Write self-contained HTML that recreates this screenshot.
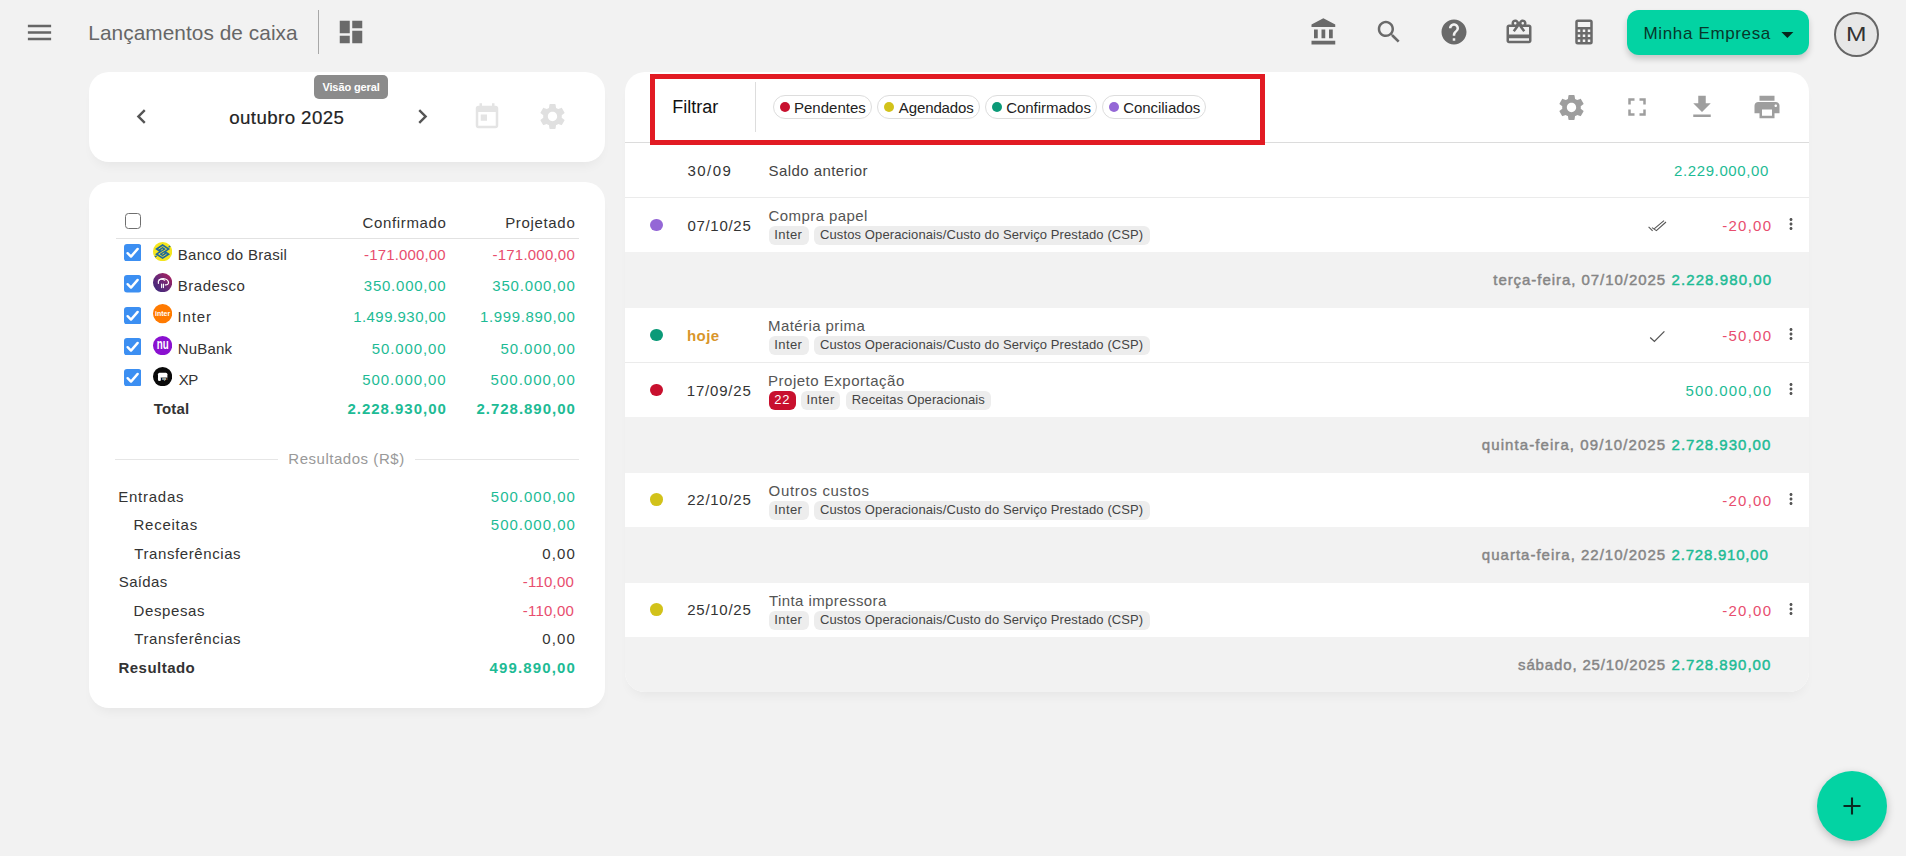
<!DOCTYPE html>
<html lang="pt-BR"><head><meta charset="utf-8"><title>Lançamentos de caixa</title>
<style>
html,body{margin:0;padding:0}
body{width:1906px;height:856px;overflow:hidden;background:#f2f2f2;position:relative;font-family:"Liberation Sans",sans-serif;}
.abs,.ic,.t{position:absolute;display:block}
.t{white-space:nowrap;line-height:1}
.card{background:#fff;border-radius:20px;box-shadow:0 8px 12px -5px rgba(0,0,0,.055)}
.btn{background:#03d3a3;border-radius:12px;box-shadow:0 4px 6px rgba(0,0,0,.18)}
.avatar{box-sizing:border-box;border:2px solid #666;border-radius:50%;background:#e7e7e7}
.fchip{box-sizing:border-box;border:1px solid #ddd;border-radius:12px;background:#fff}
.dot{border-radius:50%}
.fab{border-radius:50%;background:#03d3a3;box-shadow:0 3px 8px rgba(0,0,0,.22)}
</style></head>
<body>
<svg class="ic" style="left:23.60px;top:16.50px" width="31" height="31" viewBox="0 0 24 24"><path fill="#666" d="M3 18h18v-2H3v2zm0-5h18v-2H3v2zm0-7v2h18V6H3z"/></svg>
<span class="t" id="t0" style="left:88.29px;top:23.00px;font-size:20.8px;color:#666;letter-spacing:0.067px;">Lançamentos de caixa</span>
<div class="abs" style="left:318px;top:10px;width:1px;height:44px;background:#a8a8a8"></div>
<svg class="ic" style="left:336.00px;top:17.00px" width="30" height="30" viewBox="0 0 24 24"><path fill="#6a6a6a" d="M3 13h8V3H3v10zm0 8h8v-6H3v6zm10 0h8V11h-8v10zm0-18v6h8V3h-8z"/></svg>
<svg class="ic" style="left:1309.00px;top:17.00px" width="30" height="30" viewBox="0 0 24 24"><path fill="#6a6a6a" d="M4 10v7h3v-7H4zm6 0v7h3v-7h-3zM2 22h19v-3H2v3zm14-12v7h3v-7h-3zm-4.5-9L2 6v2h19V6l-9.5-5z"/></svg>
<svg class="ic" style="left:1374.00px;top:17.00px" width="30" height="30" viewBox="0 0 24 24"><path fill="#6a6a6a" d="M15.5 14h-.79l-.28-.27C15.41 12.59 16 11.11 16 9.5 16 5.91 13.09 3 9.5 3S3 5.91 3 9.5 5.91 16 9.5 16c1.61 0 3.09-.59 4.23-1.57l.27.28v.79l5 4.99L20.49 19l-4.99-5zm-6 0C7.01 14 5 11.99 5 9.5S7.01 5 9.5 5 14 7.01 14 9.5 11.99 14 9.5 14z"/></svg>
<svg class="ic" style="left:1439.25px;top:17.00px" width="30" height="30" viewBox="0 0 24 24"><path fill="#6a6a6a" d="M12 2C6.48 2 2 6.48 2 12s4.48 10 10 10 10-4.48 10-10S17.52 2 12 2zm1 17h-2v-2h2v2zm2.07-7.75l-.9.92C13.45 12.9 13 13.5 13 15h-2v-.5c0-1.1.45-2.1 1.17-2.83l1.24-1.26c.37-.36.59-.86.59-1.41 0-1.1-.9-2-2-2s-2 .9-2 2H8c0-2.21 1.79-4 4-4s4 1.79 4 4c0 .88-.36 1.68-.93 2.25z"/></svg>
<svg class="ic" style="left:1504.00px;top:17.00px" width="30" height="30" viewBox="0 0 24 24"><path fill="#6a6a6a" d="M20 6h-2.18c.11-.31.18-.65.18-1 0-1.66-1.34-3-3-3-1.05 0-1.96.54-2.5 1.35l-.5.67-.5-.68C10.96 2.54 10.05 2 9 2 7.34 2 6 3.34 6 5c0 .35.07.69.18 1H4c-1.11 0-1.99.89-1.99 2L2 19c0 1.11.89 2 2 2h16c1.11 0 2-.89 2-2V8c0-1.11-.89-2-2-2zm-5-2c.55 0 1 .45 1 1s-.45 1-1 1-1-.45-1-1 .45-1 1-1zM9 4c.55 0 1 .45 1 1s-.45 1-1 1-1-.45-1-1 .45-1 1-1zm11 15H4v-2h16v2zm0-5H4V8h5.08L7 10.83 8.62 12 11 8.76l1-1.36 1 1.36L15.38 12 17 10.83 14.92 8H20v6z"/></svg>
<svg class="ic" style="left:1569.00px;top:17.00px" width="30" height="30" viewBox="0 0 24 24"><path fill="#6a6a6a" d="M7,2H17A2,2 0 0,1 19,4V20A2,2 0 0,1 17,22H7A2,2 0 0,1 5,20V4A2,2 0 0,1 7,2M7,4V8H17V4H7M7,10V12H9V10H7M11,10V12H13V10H11M15,10V12H17V10H15M7,14V16H9V14H7M11,14V16H13V14H11M15,14V16H17V14H15M7,18V20H9V18H7M11,18V20H13V18H11M15,18V20H17V18H15Z"/></svg>
<div class="abs btn" style="left:1627px;top:10px;width:182px;height:44.5px"></div>
<span class="t" id="t1" style="left:1643.51px;top:25.00px;font-size:17px;color:#07382b;letter-spacing:0.645px;">Minha Empresa</span>
<svg class="ic" style="left:1772.60px;top:20.10px" width="28.8" height="28.8" viewBox="0 0 24 24"><path fill="#07251c" d="M7 10l5 5 5-5z"/></svg>
<div class="abs avatar" style="left:1834px;top:12px;width:45px;height:45px"></div>
<span class="t" id="t2" style="left:1846.38px;top:23.00px;font-size:21px;color:#333;transform:scaleX(1.17);transform-origin:0 0;">M</span>
<div class="abs card" style="left:89px;top:72px;width:516px;height:90px"></div>
<svg class="ic" style="left:127.00px;top:102.00px" width="29" height="29" viewBox="0 0 24 24"><path fill="#555" d="M15.41 7.41L14 6l-6 6 6 6 1.41-1.41L10.83 12z"/></svg>
<span class="t" id="t3" style="left:229.21px;top:109.00px;font-size:18.7px;color:#222;letter-spacing:0.414px;-webkit-text-stroke:0.2px #222;">outubro 2025</span>
<svg class="ic" style="left:408.20px;top:102.00px" width="29" height="29" viewBox="0 0 24 24"><path fill="#555" d="M10 6L8.59 7.41 13.17 12l-4.58 4.59L10 18l6-6z"/></svg>
<svg class="ic" style="left:472.25px;top:101.75px" width="30" height="30" viewBox="0 0 24 24"><path fill="#e4e4e4" d="M19 3h-1V1h-2v2H8V1H6v2H5c-1.11 0-1.99.9-1.99 2L3 19c0 1.1.89 2 2 2h14c1.1 0 2-.9 2-2V5c0-1.1-.9-2-2-2zm0 16H5V8h14v11zM7 10h5v5H7z"/></svg>
<svg class="ic" style="left:537.25px;top:101.40px" width="31" height="31" viewBox="0 0 24 24"><path fill="#e0e0e0" d="M19.14 12.94c.04-.3.06-.61.06-.94 0-.32-.02-.64-.07-.94l2.03-1.58c.18-.14.23-.41.12-.61l-1.92-3.32c-.12-.22-.37-.29-.59-.22l-2.39.96c-.5-.38-1.03-.7-1.62-.94l-.36-2.54c-.04-.24-.24-.41-.48-.41h-3.84c-.24 0-.43.17-.47.41l-.36 2.54c-.59.24-1.13.57-1.62.94l-2.39-.96c-.22-.08-.47 0-.59.22L2.74 8.87c-.12.21-.08.47.12.61l2.03 1.58c-.05.3-.09.63-.09.94s.02.64.07.94l-2.03 1.58c-.18.14-.23.41-.12.61l1.92 3.32c.12.22.37.29.59.22l2.39-.96c.5.38 1.03.7 1.62.94l.36 2.54c.05.24.24.41.48.41h3.84c.24 0 .44-.17.47-.41l.36-2.54c.59-.24 1.13-.56 1.62-.94l2.39.96c.22.08.47 0 .59-.22l1.92-3.32c.12-.22.07-.47-.12-.61l-2.01-1.58zM12 15.6c-1.98 0-3.6-1.62-3.6-3.6s1.62-3.6 3.6-3.6 3.6 1.62 3.6 3.6-1.62 3.6-3.6 3.6z"/></svg>
<div class="abs" style="left:313.5px;top:75px;width:74.5px;height:24px;border-radius:5px;background:#8b8b8b"></div>
<span class="t" id="t4" style="left:322.42px;top:82.00px;font-size:11px;color:#fff;font-weight:700;letter-spacing:-0.114px;">Visão geral</span>
<div class="abs card" style="left:89px;top:182px;width:516px;height:526px"></div>
<div class="abs" style="left:124.5px;top:213px;width:16px;height:16px;box-sizing:border-box;border:1.7px solid #6f6f6f;border-radius:3.5px;background:#fff"></div>
<span class="t" id="t5" style="left:362.44px;top:215.00px;font-size:15px;color:#333;letter-spacing:0.662px;">Confirmado</span>
<span class="t" id="t6" style="left:505.17px;top:215.00px;font-size:15px;color:#333;letter-spacing:0.669px;">Projetado</span>
<div class="abs" style="left:116px;top:238px;width:463px;height:1px;background:#e2e2e2"></div>
<svg class="ic" style="left:124px;top:244.00px" width="17.4" height="17.4" viewBox="0 0 17.4 17.4"><rect width="17.4" height="17.4" rx="3" fill="#3c8ff2"/><path d="M3.6 9.2 L7 12.6 L13.7 4.9" fill="none" stroke="#fff" stroke-width="2.4" stroke-linecap="round" stroke-linejoin="round"/></svg>
<svg class="ic" style="left:153px;top:241.9px" width="19.2" height="19.2" viewBox="0 0 20 20"><circle cx="10" cy="10" r="10" fill="#f4e51d"/><path d="M10 2.2 L17.8 7.3 L13.8 10 L17.8 12.7 L10 17.8 L2.2 12.7 L6.2 10 L2.2 7.3 Z" fill="#1f679a"/><path d="M18 4.3 L16.2 5.5 M2 15.7 L3.8 14.5" stroke="#1f679a" stroke-width="1.4" fill="none"/><path d="M5.8 7.4 L10 4.7 L14.2 7.4 L5.8 12.6 L10 15.3 L14.2 12.6" fill="none" stroke="#e6dd3c" stroke-width="1"/><path d="M8.2 8.6 L10.4 7.2 M11.8 11.4 L9.6 12.8" fill="none" stroke="#e6dd3c" stroke-width="0.9"/></svg>
<span class="t" id="t7" style="left:177.77px;top:247.00px;font-size:15px;color:#333;letter-spacing:0.291px;">Banco do Brasil</span>
<span class="t" id="t8" style="left:364.03px;top:247.00px;font-size:15px;color:#e84d6e;letter-spacing:0.158px;">-171.000,00</span>
<span class="t" id="t9" style="left:492.53px;top:247.00px;font-size:15px;color:#e84d6e;letter-spacing:0.218px;">-171.000,00</span>
<svg class="ic" style="left:124px;top:275.25px" width="17.4" height="17.4" viewBox="0 0 17.4 17.4"><rect width="17.4" height="17.4" rx="3" fill="#3c8ff2"/><path d="M3.6 9.2 L7 12.6 L13.7 4.9" fill="none" stroke="#fff" stroke-width="2.4" stroke-linecap="round" stroke-linejoin="round"/></svg>
<svg class="ic" style="left:153px;top:273.15px" width="19.2" height="19.2" viewBox="0 0 20 20"><defs><linearGradient id="brg" x1="0" y1="1" x2="1" y2="0"><stop offset="0" stop-color="#33297c"/><stop offset="0.5" stop-color="#6a2877"/><stop offset="1" stop-color="#b71f58"/></linearGradient></defs><circle cx="10" cy="10" r="10" fill="url(#brg)"/><g fill="none" stroke="#fff" stroke-linecap="round"><path stroke-width="1.25" d="M5.6 10.8 C4.8 7.6 7.8 5.7 10.8 5.8 C13.8 5.9 16.4 7.8 16.2 10.2 C16 12 14.4 12.6 12.8 12.4"/><path stroke-width="1.1" d="M6.2 7.3 C7.8 6.3 10.6 6.5 12.2 7.6"/><path stroke-width="1.2" d="M9 11.6 V15.2 M10.9 11.6 V15.2"/></g></svg>
<span class="t" id="t10" style="left:177.77px;top:278.00px;font-size:15px;color:#333;letter-spacing:0.542px;">Bradesco</span>
<span class="t" id="t11" style="left:363.83px;top:278.00px;font-size:15px;color:#1dbb95;letter-spacing:0.754px;">350.000,00</span>
<span class="t" id="t12" style="left:492.23px;top:278.00px;font-size:15px;color:#1dbb95;letter-spacing:0.832px;">350.000,00</span>
<svg class="ic" style="left:124px;top:306.50px" width="17.4" height="17.4" viewBox="0 0 17.4 17.4"><rect width="17.4" height="17.4" rx="3" fill="#3c8ff2"/><path d="M3.6 9.2 L7 12.6 L13.7 4.9" fill="none" stroke="#fff" stroke-width="2.4" stroke-linecap="round" stroke-linejoin="round"/></svg>
<svg class="ic" style="left:153px;top:304.4px" width="19.2" height="19.2" viewBox="0 0 19.2 19.2"><circle cx="9.6" cy="9.6" r="9.6" fill="#ff7a00"/><text x="9.6" y="12.1" text-anchor="middle" font-family="Liberation Sans, sans-serif" font-weight="700" font-size="7" fill="#fff">inter</text></svg>
<span class="t" id="t13" style="left:177.62px;top:309.00px;font-size:15px;color:#333;letter-spacing:0.830px;">Inter</span>
<span class="t" id="t14" style="left:353.16px;top:309.00px;font-size:15px;color:#1dbb95;letter-spacing:0.450px;">1.499.930,00</span>
<span class="t" id="t15" style="left:479.96px;top:309.00px;font-size:15px;color:#1dbb95;letter-spacing:0.659px;">1.999.890,00</span>
<svg class="ic" style="left:124px;top:337.75px" width="17.4" height="17.4" viewBox="0 0 17.4 17.4"><rect width="17.4" height="17.4" rx="3" fill="#3c8ff2"/><path d="M3.6 9.2 L7 12.6 L13.7 4.9" fill="none" stroke="#fff" stroke-width="2.4" stroke-linecap="round" stroke-linejoin="round"/></svg>
<svg class="ic" style="left:153px;top:335.65px" width="19.2" height="19.2" viewBox="0 0 19.2 19.2"><circle cx="9.6" cy="9.6" r="9.6" fill="#8a10d0"/><text x="3.7" y="13.4" textLength="12" lengthAdjust="spacingAndGlyphs" font-family="Liberation Sans, sans-serif" font-weight="700" font-size="14" fill="#fff">nu</text></svg>
<span class="t" id="t16" style="left:177.77px;top:341.00px;font-size:15px;color:#333;letter-spacing:0.169px;">NuBank</span>
<span class="t" id="t17" style="left:371.70px;top:341.00px;font-size:15px;color:#1dbb95;letter-spacing:0.907px;">50.000,00</span>
<span class="t" id="t18" style="left:500.40px;top:341.00px;font-size:15px;color:#1dbb95;letter-spacing:0.957px;">50.000,00</span>
<svg class="ic" style="left:124px;top:369.00px" width="17.4" height="17.4" viewBox="0 0 17.4 17.4"><rect width="17.4" height="17.4" rx="3" fill="#3c8ff2"/><path d="M3.6 9.2 L7 12.6 L13.7 4.9" fill="none" stroke="#fff" stroke-width="2.4" stroke-linecap="round" stroke-linejoin="round"/></svg>
<svg class="ic" style="left:153px;top:366.9px" width="19.2" height="19.2" viewBox="0 0 19.2 19.2"><circle cx="9.6" cy="9.6" r="9.6" fill="#0a0a0a"/><rect x="5" y="5.7" width="9.4" height="8" rx="1.5" fill="#fff"/><rect x="7.6" y="10.6" width="7" height="3.4" fill="#0a0a0a"/><rect x="5" y="10.6" width="2.6" height="3.1" rx="1" fill="#fff"/><text x="11" y="13.5" text-anchor="middle" font-family="Liberation Sans, sans-serif" font-weight="700" font-size="3.6" fill="#fff">xp</text></svg>
<span class="t" id="t19" style="left:178.66px;top:372.00px;font-size:15px;color:#333;letter-spacing:-0.450px;">XP</span>
<span class="t" id="t20" style="left:362.20px;top:372.00px;font-size:15px;color:#1dbb95;letter-spacing:0.935px;">500.000,00</span>
<span class="t" id="t21" style="left:490.60px;top:372.00px;font-size:15px;color:#1dbb95;letter-spacing:1.013px;">500.000,00</span>
<span class="t" id="t22" style="left:153.83px;top:401.00px;font-size:15px;color:#333;font-weight:700;letter-spacing:0.125px;">Total</span>
<span class="t" id="t23" style="left:347.48px;top:401.00px;font-size:15px;color:#1dbb95;font-weight:700;letter-spacing:0.977px;">2.228.930,00</span>
<span class="t" id="t24" style="left:476.48px;top:401.00px;font-size:15px;color:#1dbb95;font-weight:700;letter-spacing:0.977px;">2.728.890,00</span>
<div class="abs" style="left:115px;top:458.5px;width:163px;height:1px;background:#e6e6e6"></div>
<div class="abs" style="left:415px;top:458.5px;width:164px;height:1px;background:#e6e6e6"></div>
<span class="t" id="t25" style="left:288.27px;top:451.00px;font-size:15px;color:#999;letter-spacing:0.535px;">Resultados (R$)</span>
<span class="t" id="t26" style="left:118.27px;top:489.00px;font-size:15px;color:#333;letter-spacing:0.748px;">Entradas</span>
<span class="t" id="t27" style="left:490.80px;top:489.00px;font-size:15px;color:#1dbb95;letter-spacing:1.001px;">500.000,00</span>
<span class="t" id="t28" style="left:133.47px;top:517.00px;font-size:15px;color:#333;letter-spacing:0.759px;">Receitas</span>
<span class="t" id="t29" style="left:490.80px;top:517.00px;font-size:15px;color:#1dbb95;letter-spacing:1.001px;">500.000,00</span>
<span class="t" id="t30" style="left:134.36px;top:546.00px;font-size:15px;color:#333;letter-spacing:0.582px;">Transferências</span>
<span class="t" id="t31" style="left:542.31px;top:546.00px;font-size:15px;color:#333;letter-spacing:1.126px;">0,00</span>
<span class="t" id="t32" style="left:118.82px;top:574.00px;font-size:15px;color:#333;letter-spacing:0.345px;">Saídas</span>
<span class="t" id="t33" style="left:522.83px;top:574.00px;font-size:15px;color:#e84d6e;letter-spacing:0.196px;">-110,00</span>
<span class="t" id="t34" style="left:133.47px;top:603.00px;font-size:15px;color:#333;letter-spacing:0.624px;">Despesas</span>
<span class="t" id="t35" style="left:522.83px;top:603.00px;font-size:15px;color:#e84d6e;letter-spacing:0.196px;">-110,00</span>
<span class="t" id="t36" style="left:134.36px;top:631.00px;font-size:15px;color:#333;letter-spacing:0.582px;">Transferências</span>
<span class="t" id="t37" style="left:542.31px;top:631.00px;font-size:15px;color:#333;letter-spacing:1.126px;">0,00</span>
<span class="t" id="t38" style="left:118.50px;top:660.00px;font-size:15px;color:#333;font-weight:700;letter-spacing:0.472px;">Resultado</span>
<span class="t" id="t39" style="left:489.47px;top:660.00px;font-size:15px;color:#1dbb95;font-weight:700;letter-spacing:1.152px;">499.890,00</span>
<div class="abs card rc" style="left:625px;top:72px;width:1184px;height:620px"></div>
<div class="abs" style="left:625px;top:142px;width:1184px;height:1px;background:#dcdcdc"></div>
<div class="abs" style="left:625px;top:197px;width:1184px;height:1px;background:#ebebeb"></div>
<div class="abs" style="left:625px;top:362px;width:1184px;height:1px;background:#ebebeb"></div>
<div class="abs" style="left:650px;top:74px;width:615px;height:71px;box-sizing:border-box;border:5px solid #e21b23"></div>
<span class="t" id="t40" style="left:672.32px;top:98.00px;font-size:18px;color:#111;letter-spacing:-0.020px;">Filtrar</span>
<div class="abs" style="left:755px;top:82px;width:1px;height:50px;background:#ddd"></div>
<div class="abs fchip" style="left:773.1px;top:95px;width:98.8px;height:24px"></div>
<div class="abs dot" style="left:779.7px;top:101.8px;width:10.4px;height:10.4px;background:#c8102e"></div>
<span class="t" id="t41" style="left:793.97px;top:100.00px;font-size:15px;color:#222;letter-spacing:0.018px;">Pendentes</span>
<div class="abs fchip" style="left:877.3px;top:95px;width:102.3px;height:24px"></div>
<div class="abs dot" style="left:883.9px;top:101.8px;width:10.4px;height:10.4px;background:#d2c21a"></div>
<span class="t" id="t42" style="left:898.77px;top:100.00px;font-size:15px;color:#222;letter-spacing:-0.104px;">Agendados</span>
<div class="abs fchip" style="left:985.4px;top:95px;width:111.3px;height:24px"></div>
<div class="abs dot" style="left:992.0px;top:101.8px;width:10.4px;height:10.4px;background:#0b9a78"></div>
<span class="t" id="t43" style="left:1006.14px;top:100.00px;font-size:15px;color:#222;letter-spacing:-0.023px;">Confirmados</span>
<div class="abs fchip" style="left:1102.4px;top:95px;width:103.4px;height:24px"></div>
<div class="abs dot" style="left:1109.0px;top:101.8px;width:10.4px;height:10.4px;background:#9467d6"></div>
<span class="t" id="t44" style="left:1123.14px;top:100.00px;font-size:15px;color:#222;letter-spacing:-0.034px;">Conciliados</span>
<svg class="ic" style="left:1556.10px;top:91.50px" width="31" height="31" viewBox="0 0 24 24"><path fill="#9e9e9e" d="M19.14 12.94c.04-.3.06-.61.06-.94 0-.32-.02-.64-.07-.94l2.03-1.58c.18-.14.23-.41.12-.61l-1.92-3.32c-.12-.22-.37-.29-.59-.22l-2.39.96c-.5-.38-1.03-.7-1.62-.94l-.36-2.54c-.04-.24-.24-.41-.48-.41h-3.84c-.24 0-.43.17-.47.41l-.36 2.54c-.59.24-1.13.57-1.62.94l-2.39-.96c-.22-.08-.47 0-.59.22L2.74 8.87c-.12.21-.08.47.12.61l2.03 1.58c-.05.3-.09.63-.09.94s.02.64.07.94l-2.03 1.58c-.18.14-.23.41-.12.61l1.92 3.32c.12.22.37.29.59.22l2.39-.96c.5.38 1.03.7 1.62.94l.36 2.54c.05.24.24.41.48.41h3.84c.24 0 .44-.17.47-.41l.36-2.54c.59-.24 1.13-.56 1.62-.94l2.39.96c.22.08.47 0 .59-.22l1.92-3.32c.12-.22.07-.47-.12-.61l-2.01-1.58zM12 15.6c-1.98 0-3.6-1.62-3.6-3.6s1.62-3.6 3.6-3.6 3.6 1.62 3.6 3.6-1.62 3.6-3.6 3.6z"/></svg>
<svg class="ic" style="left:1621.60px;top:92.00px" width="30" height="30" viewBox="0 0 24 24"><path fill="#9e9e9e" d="M7 14H5v5h5v-2H7v-3zm-2-4h2V7h3V5H5v5zm12 7h-3v2h5v-5h-2v3zM14 5v2h3v3h2V5h-5z"/></svg>
<svg class="ic" style="left:1686.60px;top:92.00px" width="30" height="30" viewBox="0 0 24 24"><path fill="#9e9e9e" d="M19 9h-4V3H9v6H5l7 7 7-7zM5 18v2h14v-2H5z"/></svg>
<svg class="ic" style="left:1751.60px;top:92.00px" width="30" height="30" viewBox="0 0 24 24"><path fill="#9e9e9e" d="M19 8H5c-1.66 0-3 1.34-3 3v6h4v4h12v-4h4v-6c0-1.66-1.34-3-3-3zm-3 11H8v-5h8v5zm3-7c-.55 0-1-.45-1-1s.45-1 1-1 1 .45 1 1-.45 1-1 1zm-1-9H6v4h12V3z"/></svg>
<span class="t" id="t45" style="left:687.43px;top:163.00px;font-size:15px;color:#333;letter-spacing:1.486px;">30/09</span>
<span class="t" id="t46" style="left:768.62px;top:163.00px;font-size:15px;color:#444;letter-spacing:0.418px;">Saldo anterior</span>
<span class="t" id="t47" style="left:1674.05px;top:163.00px;font-size:15px;color:#1dbb95;letter-spacing:0.605px;">2.229.000,00</span>
<div class="abs dot" style="left:650px;top:218.7px;width:13px;height:12.6px;background:#9467d6"></div>
<span class="t" id="t48" style="left:687.41px;top:218.00px;font-size:15px;color:#333;letter-spacing:0.704px;">07/10/25</span>
<span class="t" id="t49" style="left:768.54px;top:208.00px;font-size:15px;color:#555;letter-spacing:0.422px;">Compra papel</span>
<span class="t" id="t50" style="left:1722.33px;top:218.00px;font-size:15px;color:#e84d6e;letter-spacing:1.224px;">-20,00</span>
<svg class="ic" style="left:1781.60px;top:215.30px" width="18" height="18" viewBox="0 0 24 24"><path fill="#555" d="M12 8c1.1 0 2-.9 2-2s-.9-2-2-2-2 .9-2 2 .9 2 2 2zm0 2c-1.1 0-2 .9-2 2s.9 2 2 2 2-.9 2-2-.9-2-2-2zm0 6c-1.1 0-2 .9-2 2s.9 2 2 2 2-.9 2-2-.9-2-2-2z"/></svg>
<div class="abs" style="left:768.8px;top:226.3px;width:40.0px;height:18.5px;border-radius:6px;background:#ededed"></div>
<span class="t" id="t51" style="left:774.30px;top:228.00px;font-size:13px;color:#444;letter-spacing:0.401px;">Inter</span>
<div class="abs" style="left:814.1px;top:226.3px;width:335.7px;height:18.5px;border-radius:6px;background:#ededed"></div>
<span class="t" id="t52" style="left:820.04px;top:228.00px;font-size:13px;color:#444;letter-spacing:0.105px;">Custos Operacionais/Custo do Serviço Prestado (CSP)</span>
<svg class="ic" style="left:1647.6px;top:219.8px" width="22" height="14" viewBox="0 0 22 14"><path d="M0.6 6.9 L4.6 10.8 M4 7.6 L8.4 10.6 L18 2 M6.4 8.6 L16 0.6" fill="none" stroke="#555" stroke-width="1.1"/></svg>
<div class="abs" style="left:625px;top:252px;width:1184px;height:56px;background:#f2f2f2;"></div>
<span class="t" id="t53" style="left:1493.27px;top:272.00px;font-size:15px;color:#858585;letter-spacing:0.951px;-webkit-text-stroke:0.45px #858585;">terça-feira, 07/10/2025</span>
<span class="t" id="t54" style="left:1671.55px;top:272.00px;font-size:15px;color:#1dbb95;letter-spacing:1.087px;-webkit-text-stroke:0.45px #1dbb95;">2.228.980,00</span>
<div class="abs dot" style="left:650px;top:328.7px;width:13px;height:12.6px;background:#0b9a78"></div>
<span class="t" id="t55" style="left:686.95px;top:328.00px;font-size:15px;color:#d9962a;font-weight:700;letter-spacing:0.475px;">hoje</span>
<span class="t" id="t56" style="left:768.07px;top:318.00px;font-size:15px;color:#555;letter-spacing:0.420px;">Matéria prima</span>
<span class="t" id="t57" style="left:1722.33px;top:328.00px;font-size:15px;color:#e84d6e;letter-spacing:1.224px;">-50,00</span>
<svg class="ic" style="left:1781.60px;top:325.30px" width="18" height="18" viewBox="0 0 24 24"><path fill="#555" d="M12 8c1.1 0 2-.9 2-2s-.9-2-2-2-2 .9-2 2 .9 2 2 2zm0 2c-1.1 0-2 .9-2 2s.9 2 2 2 2-.9 2-2-.9-2-2-2zm0 6c-1.1 0-2 .9-2 2s.9 2 2 2 2-.9 2-2-.9-2-2-2z"/></svg>
<div class="abs" style="left:768.8px;top:336.3px;width:40.0px;height:18.5px;border-radius:6px;background:#ededed"></div>
<span class="t" id="t58" style="left:774.30px;top:338.00px;font-size:13px;color:#444;letter-spacing:0.401px;">Inter</span>
<div class="abs" style="left:814.1px;top:336.3px;width:335.7px;height:18.5px;border-radius:6px;background:#ededed"></div>
<span class="t" id="t59" style="left:820.04px;top:338.00px;font-size:13px;color:#444;letter-spacing:0.105px;">Custos Operacionais/Custo do Serviço Prestado (CSP)</span>
<svg class="ic" style="left:1648px;top:330.2px" width="20" height="14" viewBox="0 0 20 14"><path d="M2.2 7.6 L6.4 11.4 L16.4 1.4" fill="none" stroke="#555" stroke-width="1.3"/></svg>
<div class="abs dot" style="left:650px;top:383.7px;width:13px;height:12.6px;background:#c8102e"></div>
<span class="t" id="t60" style="left:686.86px;top:383.00px;font-size:15px;color:#333;letter-spacing:0.783px;">17/09/25</span>
<span class="t" id="t61" style="left:768.07px;top:373.00px;font-size:15px;color:#555;letter-spacing:0.505px;">Projeto Exportação</span>
<span class="t" id="t62" style="left:1685.40px;top:383.00px;font-size:15px;color:#1dbb95;letter-spacing:1.168px;">500.000,00</span>
<svg class="ic" style="left:1781.60px;top:380.30px" width="18" height="18" viewBox="0 0 24 24"><path fill="#555" d="M12 8c1.1 0 2-.9 2-2s-.9-2-2-2-2 .9-2 2 .9 2 2 2zm0 2c-1.1 0-2 .9-2 2s.9 2 2 2 2-.9 2-2-.9-2-2-2zm0 6c-1.1 0-2 .9-2 2s.9 2 2 2 2-.9 2-2-.9-2-2-2z"/></svg>
<div class="abs" style="left:768.8px;top:391.3px;width:27.2px;height:18.5px;border-radius:6px;background:#c8102e"></div>
<span class="t" id="t63" style="left:774.35px;top:393.00px;font-size:13px;color:#fff;letter-spacing:0.748px;">22</span>
<div class="abs" style="left:801.1px;top:391.3px;width:39.4px;height:18.5px;border-radius:6px;background:#ededed"></div>
<span class="t" id="t64" style="left:806.60px;top:393.00px;font-size:13px;color:#444;letter-spacing:0.401px;">Inter</span>
<div class="abs" style="left:846.1px;top:391.3px;width:144.5px;height:18.5px;border-radius:6px;background:#ededed"></div>
<span class="t" id="t65" style="left:851.83px;top:393.00px;font-size:13px;color:#444;letter-spacing:0.112px;">Receitas Operacionais</span>
<div class="abs" style="left:625px;top:417px;width:1184px;height:55.69999999999999px;background:#f2f2f2;"></div>
<span class="t" id="t66" style="left:1481.87px;top:437.00px;font-size:15px;color:#858585;letter-spacing:1.079px;-webkit-text-stroke:0.45px #858585;">quinta-feira, 09/10/2025</span>
<span class="t" id="t67" style="left:1671.55px;top:437.00px;font-size:15px;color:#1dbb95;letter-spacing:1.014px;-webkit-text-stroke:0.45px #1dbb95;">2.728.930,00</span>
<div class="abs dot" style="left:650px;top:493.4px;width:13px;height:12.6px;background:#d2c21a"></div>
<span class="t" id="t68" style="left:687.25px;top:492.00px;font-size:15px;color:#333;letter-spacing:0.728px;">22/10/25</span>
<span class="t" id="t69" style="left:768.59px;top:483.00px;font-size:15px;color:#555;letter-spacing:0.660px;">Outros custos</span>
<span class="t" id="t70" style="left:1722.33px;top:493.00px;font-size:15px;color:#e84d6e;letter-spacing:1.224px;">-20,00</span>
<svg class="ic" style="left:1781.60px;top:490.00px" width="18" height="18" viewBox="0 0 24 24"><path fill="#555" d="M12 8c1.1 0 2-.9 2-2s-.9-2-2-2-2 .9-2 2 .9 2 2 2zm0 2c-1.1 0-2 .9-2 2s.9 2 2 2 2-.9 2-2-.9-2-2-2zm0 6c-1.1 0-2 .9-2 2s.9 2 2 2 2-.9 2-2-.9-2-2-2z"/></svg>
<div class="abs" style="left:768.8px;top:501.0px;width:40.0px;height:18.5px;border-radius:6px;background:#ededed"></div>
<span class="t" id="t71" style="left:774.30px;top:503.00px;font-size:13px;color:#444;letter-spacing:0.401px;">Inter</span>
<div class="abs" style="left:814.1px;top:501.0px;width:335.7px;height:18.5px;border-radius:6px;background:#ededed"></div>
<span class="t" id="t72" style="left:820.04px;top:503.00px;font-size:13px;color:#444;letter-spacing:0.105px;">Custos Operacionais/Custo do Serviço Prestado (CSP)</span>
<div class="abs" style="left:625px;top:527px;width:1184px;height:55.700000000000045px;background:#f2f2f2;"></div>
<span class="t" id="t73" style="left:1481.87px;top:547.00px;font-size:15px;color:#858585;letter-spacing:1.006px;-webkit-text-stroke:0.45px #858585;">quarta-feira, 22/10/2025</span>
<span class="t" id="t74" style="left:1671.55px;top:547.00px;font-size:15px;color:#1dbb95;letter-spacing:0.787px;-webkit-text-stroke:0.45px #1dbb95;">2.728.910,00</span>
<div class="abs dot" style="left:650px;top:603.4px;width:13px;height:12.6px;background:#d2c21a"></div>
<span class="t" id="t75" style="left:687.25px;top:602.00px;font-size:15px;color:#333;letter-spacing:0.728px;">25/10/25</span>
<span class="t" id="t76" style="left:768.96px;top:593.00px;font-size:15px;color:#555;letter-spacing:0.416px;">Tinta impressora</span>
<span class="t" id="t77" style="left:1722.33px;top:603.00px;font-size:15px;color:#e84d6e;letter-spacing:1.224px;">-20,00</span>
<svg class="ic" style="left:1781.60px;top:600.00px" width="18" height="18" viewBox="0 0 24 24"><path fill="#555" d="M12 8c1.1 0 2-.9 2-2s-.9-2-2-2-2 .9-2 2 .9 2 2 2zm0 2c-1.1 0-2 .9-2 2s.9 2 2 2 2-.9 2-2-.9-2-2-2zm0 6c-1.1 0-2 .9-2 2s.9 2 2 2 2-.9 2-2-.9-2-2-2z"/></svg>
<div class="abs" style="left:768.8px;top:611.0px;width:40.0px;height:18.5px;border-radius:6px;background:#ededed"></div>
<span class="t" id="t78" style="left:774.30px;top:613.00px;font-size:13px;color:#444;letter-spacing:0.401px;">Inter</span>
<div class="abs" style="left:814.1px;top:611.0px;width:335.7px;height:18.5px;border-radius:6px;background:#ededed"></div>
<span class="t" id="t79" style="left:820.04px;top:613.00px;font-size:13px;color:#444;letter-spacing:0.105px;">Custos Operacionais/Custo do Serviço Prestado (CSP)</span>
<div class="abs" style="left:625px;top:637px;width:1184px;height:55px;background:#f2f2f2;border-radius:0 0 20px 20px;"></div>
<span class="t" id="t80" style="left:1518.08px;top:657.00px;font-size:15px;color:#858585;letter-spacing:0.849px;-webkit-text-stroke:0.45px #858585;">sábado, 25/10/2025</span>
<span class="t" id="t81" style="left:1671.55px;top:657.00px;font-size:15px;color:#1dbb95;letter-spacing:1.014px;-webkit-text-stroke:0.45px #1dbb95;">2.728.890,00</span>
<div class="abs fab" style="left:1817px;top:771px;width:70px;height:70px"></div>
<svg class="ic" style="left:1842px;top:796px" width="20" height="20" viewBox="0 0 20 20"><path d="M10 1.5V18.5M1.5 10H18.5" stroke="#0b2a22" stroke-width="2.1" fill="none"/></svg>
</body></html>
